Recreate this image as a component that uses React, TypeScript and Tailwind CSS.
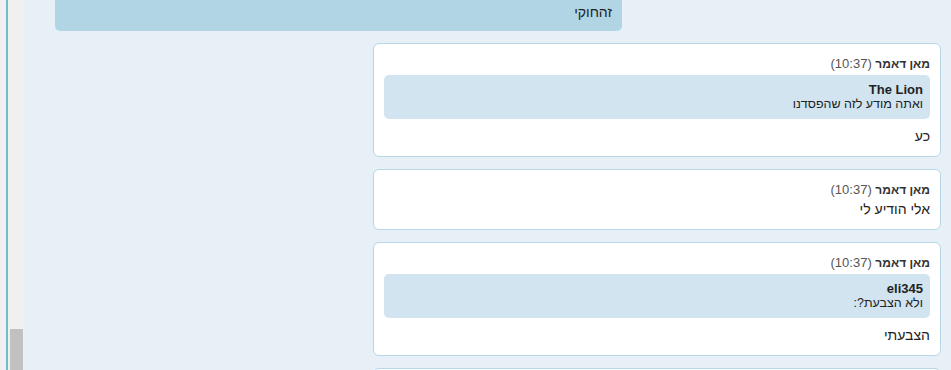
import React from "react";

type Msg = {
  quote?: { author: string; text: string };
  text: string;
};

const messages: Msg[] = [
  { quote: { author: "The Lion", text: "ואתה מודע לזה שהפסדנו" }, text: "כע" },
  { text: "אלי הודיע לי" },
  { quote: { author: "eli345", text: "ולא הצבעת?:" }, text: "הצבעתי" },
];

function Card({ m }: { m: Msg }) {
  return (
    <div
      dir="rtl"
      className="ml-auto mr-[10px] w-[568px] shrink-0 rounded-[6px] border border-[#b7d6e6] bg-white px-[10px] pt-[13px] pb-[12px]"
    >
      <div className="text-[12px] leading-[14px] text-[#333]">
        <span className="font-bold">מאן דאמר</span>
        <span className="text-[13px] text-[#555]"> (10:37)</span>
      </div>
      {m.quote ? (
        <>
          <div className="mt-[4px] rounded-[5px] bg-[#d1e4f0] pr-[7px] pl-[7px] pt-[7px] pb-[7px]">
            <div className="text-[13px] font-bold leading-[15px] text-[#222]">{m.quote.author}</div>
            <div className="text-[12.5px] leading-[15px] text-[#222]">{m.quote.text}</div>
          </div>
          <div className="mt-[9px] text-[14px] leading-[16px] text-[#222]">{m.text}</div>
        </>
      ) : (
        <div className="mt-[4px] text-[14px] leading-[16px] text-[#222]">{m.text}</div>
      )}
    </div>
  );
}

export default function App() {
  return (
    <div
      className="flex h-[370px] w-[951px] overflow-hidden bg-[#e8f0f7]"
      style={{ fontFamily: '"Liberation Sans", Arial, sans-serif' }}
    >
      <div className="w-[6px] shrink-0 bg-[#f3eef1]" />
      <div className="w-[2px] shrink-0 bg-[#6fbfca]" />
      <div className="relative w-[16px] shrink-0 bg-[#f0f0f0]">
        <div className="absolute bottom-0 left-[2px] h-[41px] w-[13px] bg-[#c1c1c1]" />
      </div>
      <div className="flex min-w-0 flex-1 flex-col gap-[12px]">
        <div
          dir="rtl"
          className="ml-[31px] h-[31px] w-[567px] shrink-0 rounded-b-[5px] bg-[#b2d5e5] pr-[10px] pt-[4px] text-[14px] leading-[16px] text-[#222]"
        >
          זהחוקי
        </div>
        {messages.map((m, i) => (
          <Card key={i} m={m} />
        ))}
        <div className="ml-auto mr-[10px] h-[60px] w-[568px] shrink-0 rounded-[6px] border border-[#b7d6e6] bg-white" />
      </div>
    </div>
  );
}
